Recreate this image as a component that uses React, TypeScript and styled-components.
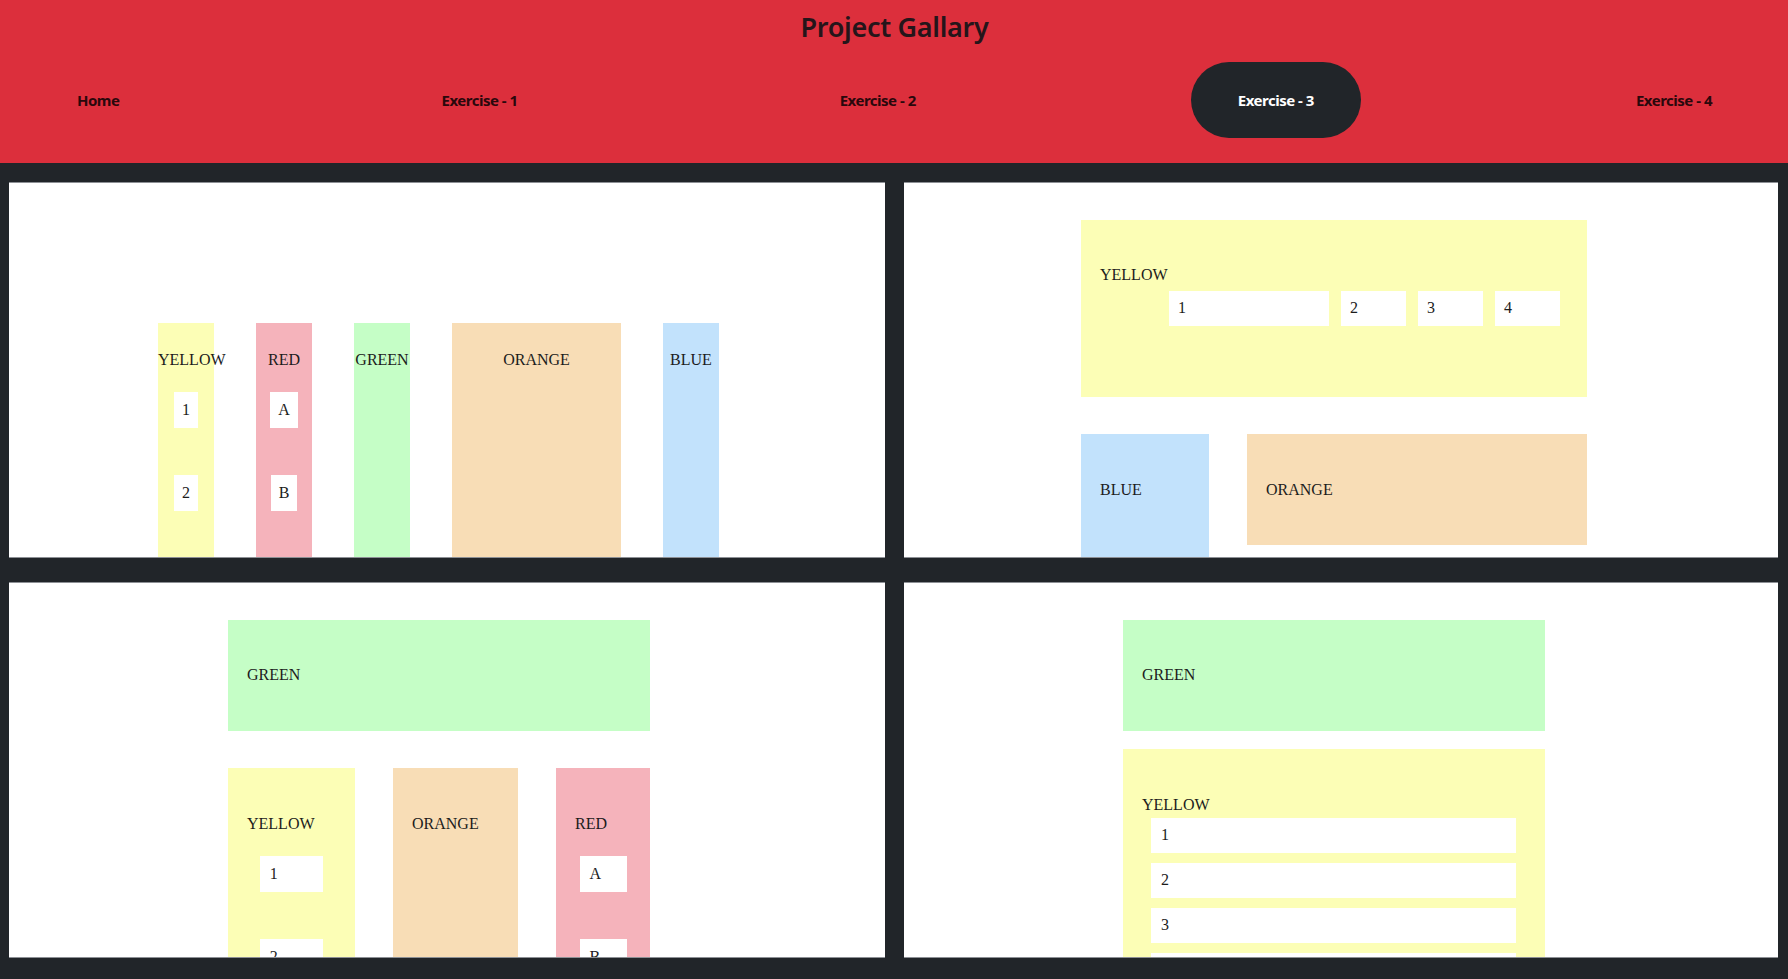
import React from 'react';
import styled, { createGlobalStyle } from 'styled-components';

const colors = {
  yellow: '#fcfeb6',
  red: '#f5b3bb',
  green: '#c5fec6',
  orange: '#f8ddb6',
  blue: '#c2e2fc',
};

const GlobalStyle = createGlobalStyle`
  * { box-sizing: border-box; }
  body {
    margin: 0;
    background: #212529;
    font-family: "Noto Sans", "Open Sans", sans-serif;
  }
`;

const navItems = ['Home', 'Exercise - 1', 'Exercise - 2', 'Exercise - 3', 'Exercise - 4'];

export default function App() {
  return (
    <>
      <GlobalStyle />
      <Header>
        <Title>Project Gallary</Title>
        <Nav>
          {navItems.map((item) => (
            <NavLink key={item} $active={item === 'Exercise - 3'}>
              {item}
            </NavLink>
          ))}
        </Nav>
      </Header>

      <Grid>
        {/* exercise 1: columns */}
        <Panel>
          <Strip>
            <Column $bg={colors.yellow} $w={56}>
              <ColumnLabel>YELLOW</ColumnLabel>
              <Chip>1</Chip>
              <Chip>2</Chip>
              <Chip>3</Chip>
            </Column>
            <Column $bg={colors.red} $w={56}>
              <ColumnLabel>RED</ColumnLabel>
              <Chip>A</Chip>
              <Chip>B</Chip>
              <Chip>C</Chip>
            </Column>
            <Column $bg={colors.green} $w={56}>
              <ColumnLabel>GREEN</ColumnLabel>
            </Column>
            <Column $bg={colors.orange} $w={169}>
              <ColumnLabel>ORANGE</ColumnLabel>
            </Column>
            <Column $bg={colors.blue} $w={56}>
              <ColumnLabel>BLUE</ColumnLabel>
            </Column>
          </Strip>
        </Panel>

        {/* exercise 2: row of cells */}
        <Panel>
          <Stack>
            <Block $bg={colors.yellow} $w={506} $h={177} $pt={46}>
              <BlockLabel>YELLOW</BlockLabel>
              <CellRow>
                <Cell $w={160}>1</Cell>
                <Cell $w={65}>2</Cell>
                <Cell $w={65}>3</Cell>
                <Cell $w={65}>4</Cell>
              </CellRow>
            </Block>
            <BlockRow $mt={37}>
              <Block $bg={colors.blue} $w={128} $h={190} $pt={47}>
                <BlockLabel>BLUE</BlockLabel>
              </Block>
              <Block $bg={colors.orange} $w={340} $h={111} $pt={47}>
                <BlockLabel>ORANGE</BlockLabel>
              </Block>
            </BlockRow>
          </Stack>
        </Panel>

        {/* exercise 3 */}
        <Panel>
          <Stack $left={219}>
            <Block $bg={colors.green} $w={422} $h={111} $pt={46}>
              <BlockLabel>GREEN</BlockLabel>
            </Block>
            <BlockRow $mt={37} $stretch>
              <Block $bg={colors.yellow} $w={127} $pt={47}>
                <BlockLabel>YELLOW</BlockLabel>
                <HalfChip>1</HalfChip>
                <HalfChip>2</HalfChip>
                <HalfChip>3</HalfChip>
              </Block>
              <Block $bg={colors.orange} $w={125} $pt={47}>
                <BlockLabel>ORANGE</BlockLabel>
              </Block>
              <Block $bg={colors.red} $w={94} $pt={47}>
                <BlockLabel>RED</BlockLabel>
                <HalfChip>A</HalfChip>
                <HalfChip>B</HalfChip>
                <HalfChip>C</HalfChip>
              </Block>
            </BlockRow>
          </Stack>
        </Panel>

        {/* exercise 4 */}
        <Panel>
          <Stack $left={219}>
            <Block $bg={colors.green} $w={422} $h={111} $pt={46}>
              <BlockLabel>GREEN</BlockLabel>
            </Block>
            <Block $bg={colors.yellow} $w={422} $pt={47} $mt={18}>
              <BlockLabel>YELLOW</BlockLabel>
              <List>
                <ListItem>1</ListItem>
                <ListItem>2</ListItem>
                <ListItem>3</ListItem>
                <ListItem>4</ListItem>
                <ListItem>5</ListItem>
              </List>
            </Block>
          </Stack>
        </Panel>
      </Grid>
    </>
  );
}

const Header = styled.header`
  background: #dc2f3c;
  padding: 7px 29px 25px 30px;
`;

const Title = styled.h1`
  margin: 0;
  text-align: center;
  font-size: 27px;
  font-weight: 600;
  line-height: 40px;
  color: #25151a;
  letter-spacing: -0.3px;
`;

const Nav = styled.nav`
  display: flex;
  justify-content: space-between;
  align-items: center;
  margin-top: 15px;
`;

const NavLink = styled.a<{ $active?: boolean }>`
  display: block;
  padding: 28px 47px;
  border-radius: 40px;
  font-size: 15px;
  font-weight: 700;
  line-height: 20px;
  letter-spacing: -0.5px;
  white-space: nowrap;
  color: ${(p) => (p.$active ? '#ffffff' : '#2a080c')};
  background: ${(p) => (p.$active ? '#212529' : 'transparent')};
  cursor: pointer;
`;

const Grid = styled.main`
  display: grid;
  grid-template-columns: 876px 874px;
  grid-template-rows: 376px 376px;
  column-gap: 19px;
  row-gap: 24px;
  padding: 19px 10px 21px 9px;
`;

const Panel = styled.section`
  background: #ffffff;
  overflow: hidden;
  border-top: 1px solid #8d9095;
  border-bottom: 1px solid #8d9095;
  font-family: "Liberation Serif", "Times New Roman", serif;
  font-size: 16px;
  color: #1c1c1c;
`;

const Strip = styled.div`
  display: flex;
  gap: 42px;
  padding: 140px 0 0 149px;
`;

const Column = styled.div<{ $bg: string; $w: number }>`
  width: ${(p) => p.$w}px;
  min-height: 320px;
  flex-shrink: 0;
  background: ${(p) => p.$bg};
  padding-top: 28px;
  text-align: center;
`;

const ColumnLabel = styled.div`
  line-height: 18px;
  white-space: nowrap;
`;

const Chip = styled.div`
  width: fit-content;
  margin: 23px auto 47px;
  padding: 9px 8px;
  line-height: 18px;
  background: #ffffff;
`;

const Stack = styled.div<{ $left?: number }>`
  display: flex;
  flex-direction: column;
  align-items: flex-start;
  padding: 37px 0 0 ${(p) => p.$left ?? 177}px;
`;

const Block = styled.div<{ $bg: string; $w: number; $h?: number; $pt: number; $mt?: number }>`
  width: ${(p) => p.$w}px;
  ${(p) => (p.$h ? `height: ${p.$h}px;` : '')}
  flex-shrink: 0;
  margin-top: ${(p) => p.$mt ?? 0}px;
  padding-top: ${(p) => p.$pt}px;
  background: ${(p) => p.$bg};
`;

const BlockLabel = styled.div`
  padding-left: 19px;
  line-height: 18px;
  white-space: nowrap;
`;

const BlockRow = styled.div<{ $mt: number; $stretch?: boolean }>`
  display: flex;
  align-items: ${(p) => (p.$stretch ? 'stretch' : 'flex-start')};
  gap: 38px;
  margin-top: ${(p) => p.$mt}px;
`;

const CellRow = styled.div`
  display: flex;
  gap: 12px;
  margin: 7px 0 0 88px;
`;

const Cell = styled.div<{ $w: number }>`
  width: ${(p) => p.$w}px;
  padding: 8px 9px 9px;
  line-height: 18px;
  background: #ffffff;
`;

const HalfChip = styled.div`
  width: 50%;
  margin: 23px auto 47px;
  padding: 9px 10px;
  line-height: 18px;
  background: #ffffff;
`;

const List = styled.div`
  display: flex;
  flex-direction: column;
  gap: 10px;
  padding: 4px 29px 20px 28px;
`;

const ListItem = styled.div`
  padding: 8px 10px 9px;
  line-height: 18px;
  background: #ffffff;
`;
